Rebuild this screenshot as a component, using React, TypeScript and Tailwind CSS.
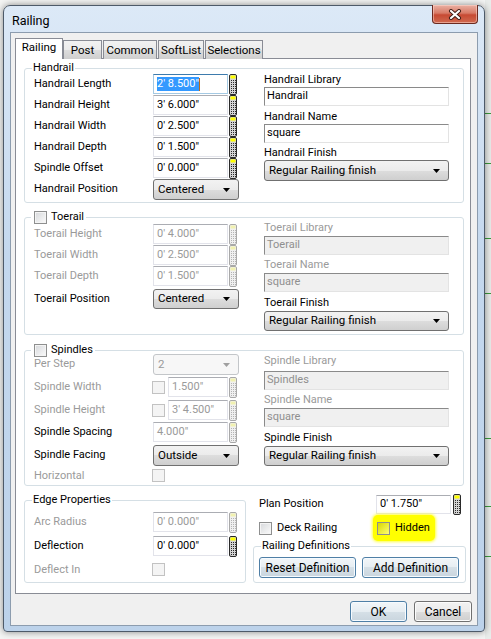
import React from 'react'
import { clsx } from 'clsx'

// Win7-style "Railing" dialog

const Calc: React.FC<{ disabled?: boolean; className?: string }> = ({ disabled, className }) => {
  const dots: React.ReactNode[] = []
  for (let y = 6; y < 20; y += 2) {
    for (let x = 2; x < 7; x += 2) {
      dots.push(<rect key={`${x}-${y}`} x={x} y={y} width={1} height={1} fill={disabled ? '#b4b4b4' : '#2a2a2a'} />)
    }
  }
  return (
    <svg width="8" height="21" viewBox="0 0 8 21" className={clsx('shrink-0', className)}>
      <rect x="0.5" y="0.5" width="7" height="20" rx="1.5" fill={disabled ? '#f0f0f0' : '#d4d4d4'} stroke={disabled ? '#a8a8a8' : '#2a2a2a'} />
      <rect x="1.5" y="1.5" width="5" height="3" fill={disabled ? '#f1f1b0' : '#ffff00'} />
      {dots}
    </svg>
  )
}

const Arrow: React.FC<{ disabled?: boolean }> = ({ disabled }) => (
  <svg width="7" height="4" viewBox="0 0 7 4">
    <polygon points="0,0 7,0 3.5,4" fill={disabled ? '#a0a0a0' : '#000'} />
  </svg>
)

const TextBox: React.FC<{ value: string; w: string; h?: string; disabled?: boolean; selected?: boolean }> = ({
  value,
  w,
  h = 'h-[20px]',
  disabled,
  selected,
}) => (
  <div
    className={clsx(
      'flex shrink-0 items-center border bg-white pl-[3px]',
      w,
      h,
      selected ? 'border-[#a4c9e3] border-t-[#3d7bad]' : 'border-[#e2e3ea] border-t-[#abadb3]',
      disabled ? 'text-[#9a9a9a]' : 'text-black'
    )}
  >
    {selected ? (
      <>
        <span className="bg-[#3399ff] leading-[14px] text-white">{value}</span>
        <span className="h-[13px] w-px bg-[#b86a1e]" />
      </>
    ) : (
      value
    )}
  </div>
)

const FieldBox: React.FC<{ value: string; disabled?: boolean }> = ({ value, disabled }) => (
  <div
    className={clsx(
      'flex h-[19px] w-[185px] items-center border border-t-[#8a8a8a] border-l-[#8a8a8a] border-r-[#e3e3e3] border-b-[#e3e3e3] pl-[2px]',
      disabled ? 'bg-[#f0f0f0] text-[#8f8f8f]' : 'bg-white text-black'
    )}
  >
    {value}
  </div>
)

const Select: React.FC<{ value: string; w: string; h?: string; disabled?: boolean; className?: string }> = ({
  value,
  w,
  h = 'h-[21px]',
  disabled,
  className,
}) => (
  <div
    className={clsx(
      'flex shrink-0 items-center justify-between rounded-[3px] border pl-[4px] pr-[8px]',
      w,
      h,
      disabled
        ? 'border-[#c3c6c9] bg-[#f7f7f7] text-[#9a9a9a]'
        : 'border-[#707070] bg-[linear-gradient(#f2f2f2,#ebebeb_50%,#dddddd_50%,#cfcfcf)] text-black',
      className
    )}
  >
    <span className="text-[11.5px]">{value}</span>
    <Arrow disabled={disabled} />
  </div>
)

const Check: React.FC<{ disabled?: boolean; className?: string }> = ({ disabled, className }) => (
  <span
    className={clsx(
      'block h-[13px] w-[13px] shrink-0 border',
      disabled
        ? 'border-[#c2c2c2] bg-[#f4f4f4]'
        : 'border-[#8e8f8f] bg-[linear-gradient(135deg,#d6d8db,#fbfbfb)] shadow-[inset_0_0_0_1px_#f4f4f4]',
      className
    )}
  />
)

const Label: React.FC<{ children: React.ReactNode; disabled?: boolean; w?: string }> = ({
  children,
  disabled,
  w = 'w-[119px]',
}) => <span className={clsx('shrink-0 leading-[20px]', w, disabled ? 'text-[#9a9a9a]' : 'text-black')}>{children}</span>

const Row: React.FC<{
  label: string
  value: string
  disabled?: boolean
  labelDisabled?: boolean
  selected?: boolean
  className?: string
}> = ({ label, value, disabled, labelDisabled, selected, className }) => (
  <div className={clsx('flex h-[20px] items-start', className)}>
    <Label disabled={labelDisabled ?? disabled}>{label}</Label>
    <TextBox value={value} w="w-[75px]" disabled={disabled} selected={selected} />
    <Calc disabled={disabled} className="ml-[1px]" />
  </div>
)

const Cap: React.FC<{ children: React.ReactNode; disabled?: boolean; className?: string }> = ({
  children,
  disabled,
  className,
}) => (
  <div className={clsx('h-[12px] leading-[12px]', disabled ? 'text-[#9a9a9a]' : 'text-black', className)}>
    {children}
  </div>
)

const Button: React.FC<{ children: React.ReactNode; w: string; blue?: boolean }> = ({ children, w, blue }) => (
  <div
    className={clsx(
      'flex h-[21px] items-center justify-center rounded-[3px] border text-[12px] text-black',
      w,
      blue
        ? 'border-[#4f7fa6] bg-[linear-gradient(#f2f6f9,#e6edf2_50%,#d6e0e7_50%,#c9d5de)] shadow-[inset_0_0_0_1px_#f6fbff]'
        : 'border-[#707070] bg-[linear-gradient(#f2f2f2,#ebebeb_50%,#dddddd_50%,#cfcfcf)] shadow-[inset_0_0_0_1px_#fcfcfc]'
    )}
  >
    {children}
  </div>
)

const tabs = ['Railing', 'Post', 'Common', 'SoftList', 'Selections']
const tabWidths = ['w-[48px]', 'w-[39px]', 'w-[54px]', 'w-[46px]', 'w-[58px]']

export default function App() {
  return (
    <div className="relative h-[639px] w-[491px] overflow-hidden bg-[#f4f5f4] pl-[3px] pt-[5px] font-[family-name:Roboto,sans-serif] text-[11px]">
      {/* desktop behind the dialog */}
      <div className="absolute right-0 top-0 h-full w-[6px] bg-[#e9ecea]">
        {[113, 163, 238, 293, 438, 506, 556].map((y) => (
          <div key={y} className="absolute left-0 h-px w-full bg-[#3c9a3c]" style={{ top: y }} />
        ))}
      </div>

      {/* window */}
      <div className="relative flex h-[627px] w-[482px] flex-col rounded-t-[7px] rounded-b-[4px] border border-[#4d5a69] bg-[linear-gradient(#dce9f7,#c4d8ee_40%,#bcd2ea)] px-[6px] pb-[5px] shadow-[0_0_7px_rgba(0,0,0,0.45)]">
        {/* title bar */}
        <div className="flex h-[26px] shrink-0 items-start justify-between">
          <span className="pl-[2px] pt-[7px] text-[12.5px] leading-[16px] text-black">Railing</span>
          <div className="-mt-px flex h-[19px] w-[46px] items-center justify-center rounded-b-[4px] border border-t-0 border-[#6b2a20] bg-[linear-gradient(#eab1a4,#d87a66_45%,#c74a33_55%,#d06a50)] shadow-[inset_0_0_0_1px_rgba(255,220,210,0.5)]">
            <svg width="14" height="11" viewBox="0 0 14 11">
              <path d="M3 2 L11 9 M11 2 L3 9" stroke="#3a1a14" strokeWidth="4" strokeLinecap="round" />
              <path d="M3 2 L11 9 M11 2 L3 9" stroke="#ffffff" strokeWidth="2.2" strokeLinecap="round" />
            </svg>
          </div>
        </div>

        {/* client area */}
        <div className="flex flex-1 flex-col border border-[#8c9cae] bg-[#f0f0f0] pl-[4px] pr-[7px] pt-[5px]">
          {/* tab strip */}
          <div className="relative z-10 -mb-px flex h-[21px] items-end text-[11.5px]">
            {tabs.map((t, i) => (
              <div
                key={t}
                className={clsx(
                  'flex items-center justify-center border border-b-0 border-[#898c95]',
                  tabWidths[i],
                  i === 0
                    ? 'h-[21px] bg-white pb-[2px]'
                    : 'h-[19px] bg-[linear-gradient(#f2f2f2,#ebebeb_50%,#dddddd_50%,#cfcfcf)] pt-[1px]',
                  i > 1 && 'ml-px'
                )}
              >
                {t}
              </div>
            ))}
          </div>

          {/* tab panel */}
          <div className="flex h-[536px] w-[456px] flex-col border border-[#898c95] bg-white pl-[8px]">
            {/* Handrail */}
            <fieldset className="mt-[2px] w-[440px] min-w-0 rounded-[3px] border border-[#d5dfe5] px-[9px] pb-[2px]">
              <legend className="-ml-[2px] px-[1px] leading-[14px]">Handrail</legend>
              <div className="flex">
                <div className="-mt-px flex w-[230px] flex-col gap-[1px]">
                  <Row label="Handrail Length" value={'2\' 8.500"'} selected />
                  <Row label="Handrail Height" value={'3\' 6.000"'} />
                  <Row label="Handrail Width" value={'0\' 2.500"'} />
                  <Row label="Handrail Depth" value={'0\' 1.500"'} />
                  <Row label="Spindle Offset" value={'0\' 0.000"'} />
                  <div className="flex h-[21px] items-start">
                    <Label>Handrail Position</Label>
                    <Select value="Centered" w="w-[86px]" />
                  </div>
                </div>
                <div className="-mt-px flex w-[185px] flex-col">
                  <Cap>Handrail Library</Cap>
                  <div className="mt-[1px]">
                    <FieldBox value="Handrail" />
                  </div>
                  <Cap className="mt-[5px]">Handrail Name</Cap>
                  <div className="mt-[1px]">
                    <FieldBox value="square" />
                  </div>
                  <Cap className="mt-[4px]">Handrail Finish</Cap>
                  <Select value="Regular Railing finish" w="w-[185px]" className="mt-[1px]" />
                </div>
              </div>
            </fieldset>

            {/* Toerail */}
            <fieldset className="mt-[7px] w-[440px] min-w-0 rounded-[3px] border border-[#d5dfe5] px-[9px] pb-[3px]">
              <legend className="-ml-[3px] flex items-center pl-[3px] pr-[2px] leading-[14px]">
                <Check />
                <span className="ml-[4px]">Toerail</span>
              </legend>
              <div className="flex">
                <div className="flex w-[230px] flex-col gap-[1px]">
                  <Row label="Toerail Height" value={'0\' 4.000"'} disabled />
                  <Row label="Toerail Width" value={'0\' 2.500"'} disabled />
                  <Row label="Toerail Depth" value={'0\' 1.500"'} disabled />
                  <div className="mt-[2px] flex h-[20px] items-start">
                    <Label>Toerail Position</Label>
                    <Select value="Centered" w="w-[86px]" h="h-[20px]" />
                  </div>
                </div>
                <div className="flex w-[185px] flex-col">
                  <Cap disabled className="-mt-[2px]">
                    Toerail Library
                  </Cap>
                  <div className="mt-[2px]">
                    <FieldBox value="Toerail" disabled />
                  </div>
                  <Cap disabled className="mt-[4px]">
                    Toerail Name
                  </Cap>
                  <div className="mt-[2px]">
                    <FieldBox value="square" disabled />
                  </div>
                  <Cap className="mt-[5px]">Toerail Finish</Cap>
                  <Select value="Regular Railing finish" w="w-[185px]" h="h-[20px]" className="mt-[2px]" />
                </div>
              </div>
            </fieldset>

            {/* Spindles */}
            <fieldset className="mt-[8px] w-[440px] min-w-0 rounded-[3px] border border-[#d5dfe5] px-[9px] pb-[2px]">
              <legend className="-ml-[3px] flex items-center pl-[3px] pr-[2px] leading-[14px]">
                <Check />
                <span className="ml-[4px]">Spindles</span>
              </legend>
              <div className="flex">
                <div className="flex w-[230px] flex-col">
                  <div className="-mt-[3px] flex h-[21px] items-start">
                    <Label disabled>Per Step</Label>
                    <Select value="2" w="w-[86px]" disabled />
                  </div>
                  <div className="mt-[2px] flex h-[20px] items-start">
                    <Label disabled w="w-[118px]">
                      Spindle Width
                    </Label>
                    <Check disabled className="mt-[4px]" />
                    <div className="ml-[3px]">
                      <TextBox value={'1.500"'} w="w-[60px]" disabled />
                    </div>
                    <Calc disabled className="ml-[1px]" />
                  </div>
                  <div className="mt-[3px] flex h-[20px] items-start">
                    <Label disabled w="w-[118px]">
                      Spindle Height
                    </Label>
                    <Check disabled className="mt-[4px]" />
                    <div className="ml-[3px]">
                      <TextBox value={'3\' 4.500"'} w="w-[60px]" disabled />
                    </div>
                    <Calc disabled className="ml-[1px]" />
                  </div>
                  <Row label="Spindle Spacing" value={'4.000"'} disabled labelDisabled={false} className="mt-[2px]" />
                  <div className="mt-[3px] flex h-[21px] items-start">
                    <Label>Spindle Facing</Label>
                    <Select value="Outside" w="w-[86px]" />
                  </div>
                  <div className="mt-[2px] flex h-[15px] items-center">
                    <Label disabled w="w-[118px]">
                      Horizontal
                    </Label>
                    <Check disabled />
                  </div>
                </div>
                <div className="flex w-[185px] flex-col">
                  <Cap disabled className="-mt-[2px]">
                    Spindle Library
                  </Cap>
                  <div className="mt-[4px]">
                    <FieldBox value="Spindles" disabled />
                  </div>
                  <Cap disabled className="mt-[4px]">
                    Spindle Name
                  </Cap>
                  <div className="mt-[2px]">
                    <FieldBox value="square" disabled />
                  </div>
                  <Cap className="mt-[5px]">Spindle Finish</Cap>
                  <Select value="Regular Railing finish" w="w-[185px]" h="h-[20px]" className="mt-[2px]" />
                </div>
              </div>
            </fieldset>

            {/* bottom section */}
            <div className="mt-[7px] flex items-start">
              <fieldset className="w-[222px] min-w-0 rounded-[3px] border border-[#d5dfe5] px-[9px] pb-[6px]">
                <legend className="-ml-[2px] px-[1px] leading-[14px]">Edge Properties</legend>
                <Row label="Arc Radius" value={'0\' 0.000"'} disabled className="mt-[5px]" />
                <Row label="Deflection" value={'0\' 0.000"'} className="mt-[4px]" />
                <div className="mt-[7px] flex h-[13px] items-center">
                  <Label disabled w="w-[118px]">
                    Deflect In
                  </Label>
                  <Check disabled />
                </div>
              </fieldset>

              <div className="ml-[7px] flex w-[213px] flex-col">
                <div className="mt-[2px] flex h-[19px] items-center pl-[6px]">
                  <span className="w-[117px] shrink-0">Plan Position</span>
                  <TextBox value={'0\' 1.750"'} w="w-[75px]" h="h-[19px]" />
                  <Calc className="ml-[2px]" />
                </div>
                <div className="mt-[1px] flex h-[26px] items-center pl-[6px]">
                  <div className="flex w-[114px] items-center">
                    <Check />
                    <span className="ml-[5px]">Deck Railing</span>
                  </div>
                  <div className="flex h-[26px] w-[62px] items-center rounded-[5px] bg-[#ffff00] pl-[4px] shadow-[0_0_3px_1px_#ffff40]">
                    <Check className="border-[#8c8c3a] bg-[linear-gradient(135deg,#d8d800,#ffff70)] shadow-none" />
                    <span className="ml-[5px]">Hidden</span>
                  </div>
                </div>
                <fieldset className="-mt-[2px] w-[213px] min-w-0 rounded-[3px] border border-[#d5dfe5] px-[5px] pb-[4px]">
                  <legend className="ml-[2px] px-[1px] leading-[14px]">Railing Definitions</legend>
                  <div className="mt-[4px] flex gap-[6px]">
                    <Button w="w-[97px]" blue>
                      Reset Definition
                    </Button>
                    <Button w="w-[97px]" blue>
                      Add Definition
                    </Button>
                  </div>
                </fieldset>
              </div>
            </div>
          </div>

          {/* dialog buttons */}
          <div className="-mr-[2px] mt-[7px] flex justify-end gap-[7px]">
            <Button w="w-[57px]" blue>
              OK
            </Button>
            <Button w="w-[58px]">Cancel</Button>
          </div>
        </div>
      </div>
    </div>
  )
}
